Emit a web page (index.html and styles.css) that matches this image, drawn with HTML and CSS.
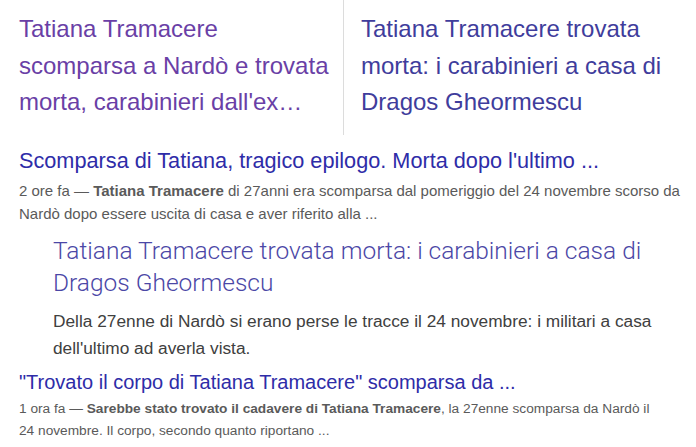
FILE: index.html
```html
<!DOCTYPE html>
<html lang="it">
<head>
<meta charset="utf-8">
<title>Tatiana Tramacere</title>
<link rel="stylesheet" href="styles.css">
</head>
<body>
<div class="page">
  <div class="cards">
    <div class="card card-left">
      <a class="card-title visited" href="#">Tatiana Tramacere scomparsa a Nardò e trovata morta, carabinieri dall'ex…</a>
    </div>
    <div class="divider"></div>
    <div class="card card-right">
      <a class="card-title" href="#">Tatiana Tramacere trovata morta: i carabinieri a casa di Dragos Gheormescu</a>
    </div>
  </div>

  <div class="result first">
    <a class="res-title" href="#">Scomparsa di Tatiana, tragico epilogo. Morta dopo l'ultimo ...</a>
    <p class="snippet">2 ore fa — <b>Tatiana Tramacere</b> di 27anni era scomparsa dal pomeriggio del 24 novembre scorso da Nardò dopo essere uscita di casa e aver riferito alla ...</p>
  </div>

  <div class="news">
    <a class="news-title" href="#">Tatiana Tramacere trovata morta: i carabinieri a casa di Dragos Gheormescu</a>
    <p class="news-snippet">Della 27enne di Nardò si erano perse le tracce il 24 novembre: i militari a casa dell'ultimo ad averla vista.</p>
  </div>

  <div class="result last">
    <a class="res-title" href="#">"Trovato il corpo di Tatiana Tramacere" scomparsa da ...</a>
    <p class="snippet snippet-narrow">1 ora fa — <b>Sarebbe stato trovato il cadavere di Tatiana Tramacere</b>, la 27enne scomparsa da Nardò il 24 novembre. Il corpo, secondo quanto riportano ...</p>
  </div>
</div>
</body>
</html>
```

FILE: styles.css
```css
html, body {
  margin: 0;
  padding: 0;
  background: #ffffff;
}
body {
  font-family: "Liberation Sans", Arial, sans-serif;
  width: 696px;
  height: 447px;
  overflow: hidden;
}
a { text-decoration: none; }
p { margin: 0; }

.page {
  display: flex;
  flex-direction: column;
}

.cards {
  display: flex;
  height: 137px;
}
.card {
  padding-top: 11px;
}
.card-left {
  width: 316px;
  padding-left: 19px;
  padding-right: 8px;
}
.card-right {
  width: 320px;
  padding-left: 17px;
}
.divider {
  width: 1px;
  background: #dcdcdc;
  height: 135px;
}
.card-title {
  display: block;
  font-size: 24px;
  line-height: 36.5px;
  color: #3f3d9c;
}
.card-title.visited {
  color: #6a3fa6;
}

.result {
  padding-left: 19px;
}
.result.first {
  margin-top: 11px;
}
.res-title {
  display: block;
  font-size: 21.7px;
  line-height: 26px;
  color: #2e2ca8;
}
.snippet {
  margin-top: 5px;
  font-size: 15px;
  line-height: 23px;
  color: #5a5a5a;
  width: 677px;
}
.snippet b {
  font-weight: bold;
  color: #5a5a5a;
}

.news {
  padding-left: 53px;
  margin-top: 10px;
}
.news-title {
  display: block;
  font-family: Roboto, "Liberation Sans", sans-serif;
  font-weight: 300;
  font-size: 24.5px;
  line-height: 32px;
  color: #4b47a6;
  width: 620px;
}
.news-snippet {
  margin-top: 9px;
  font-size: 17.3px;
  line-height: 27px;
  color: #404040;
  width: 600px;
}

.result.last {
  margin-top: 8px;
}
.result.last .res-title {
  font-size: 20px;
  line-height: 24px;
}
.snippet.snippet-narrow {
  font-size: 13.7px;
  line-height: 22px;
  margin-top: 4px;
  width: 645px;
  max-width: 645px;
}
```
